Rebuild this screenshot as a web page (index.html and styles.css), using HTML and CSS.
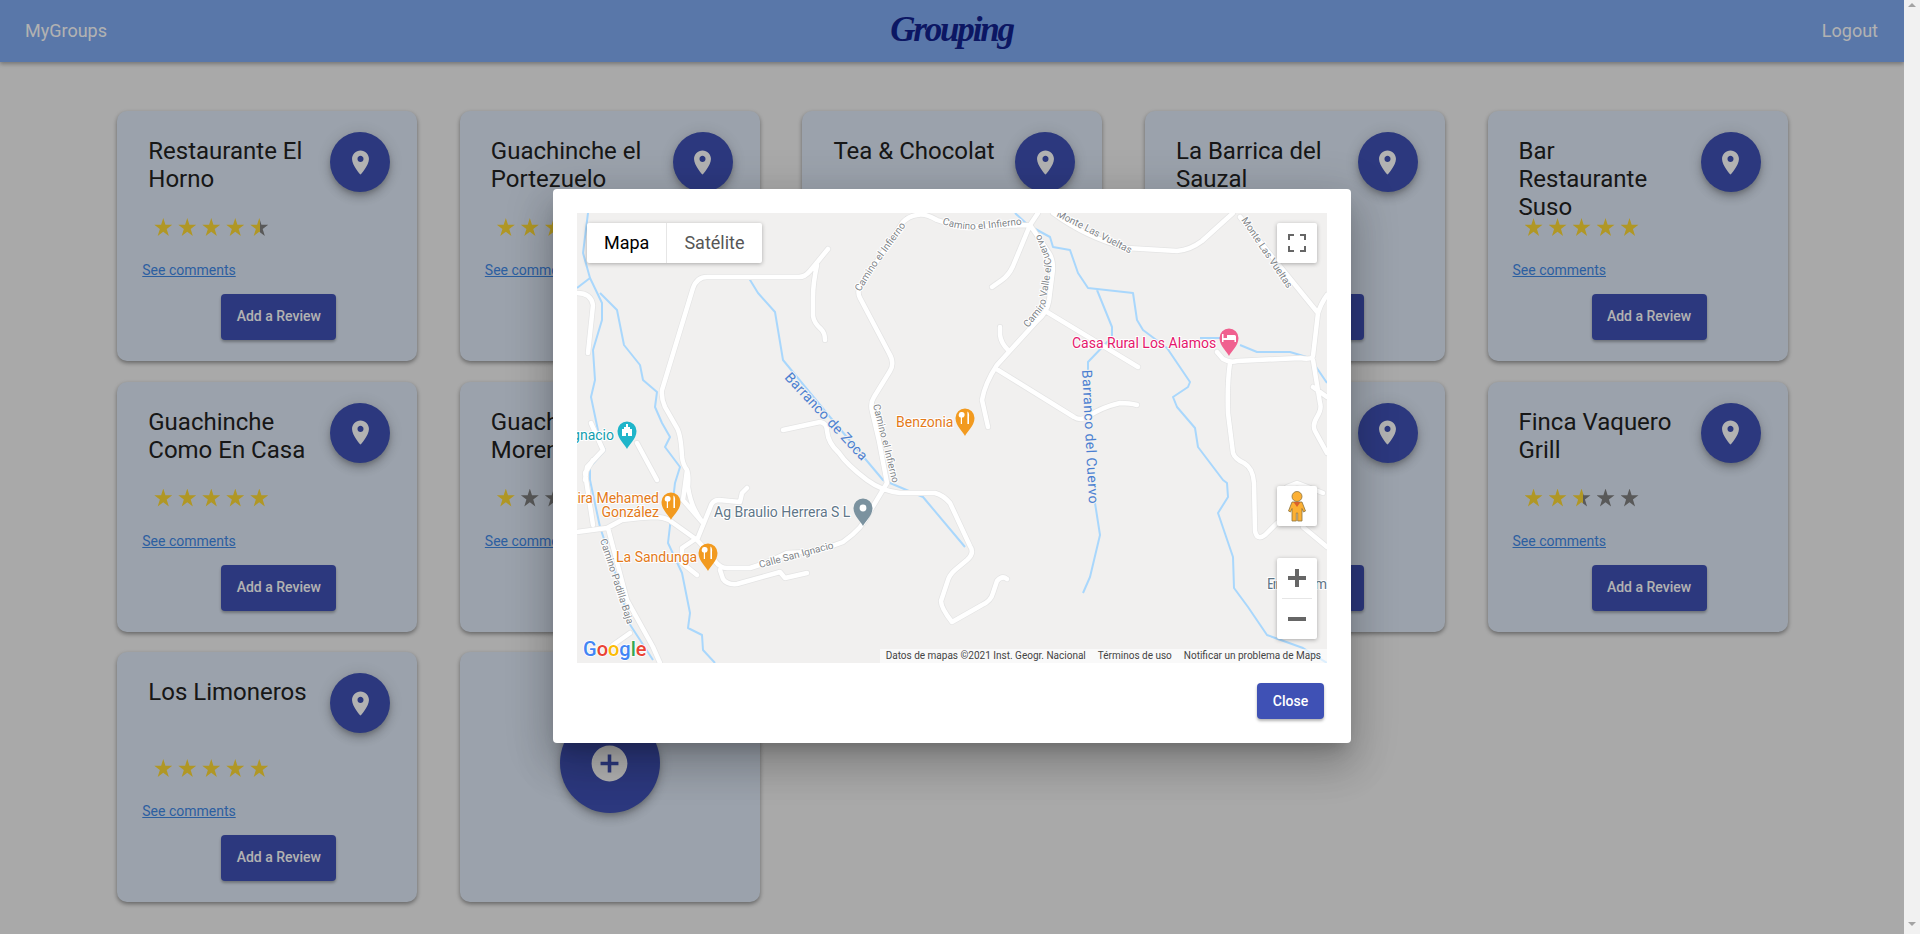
FILE: index.html
```html
<!DOCTYPE html>
<html lang="en">
<head>
    <meta charset="UTF-8">
    <meta name="viewport" content="width=device-width, initial-scale=1.0">
    <title>Grouping</title>
    <link rel="stylesheet" href="styles.css">
</head>
<body>
    <svg class="icon-defs" width="0" height="0" aria-hidden="true">
        <symbol id="icon-room" viewBox="0 0 24 24">
            <path d="M12 2C8.13 2 5 5.13 5 9c0 5.25 7 13 7 13s7-7.75 7-13c0-3.87-3.13-7-7-7zm0 9.5c-1.38 0-2.5-1.12-2.5-2.5s1.12-2.5 2.5-2.5 2.5 1.12 2.5 2.5-1.12 2.5-2.5 2.5z"/>
        </symbol>
        <symbol id="icon-add" viewBox="0 0 24 24">
            <path d="M12 2C6.48 2 2 6.48 2 12s4.48 10 10 10 10-4.48 10-10S17.52 2 12 2zm5 11h-4v4h-2v-4H7v-2h4V7h2v4h4v2z"/>
        </symbol>
    </svg>

    <div class="page">
        <header class="navbar">
            <a class="nav-link">MyGroups</a>
            <div class="logo">Grouping</div>
            <a class="nav-link nav-right">Logout</a>
        </header>

        <main class="cards">
            <article class="card">
                <div class="card-top">
                    <h2 class="card-title">Restaurante El Horno</h2>
                    <button class="fab"><svg><use href="#icon-room"/></svg></button>
                </div>
                <div class="rating"><i class="star"></i><i class="star"></i><i class="star"></i><i class="star"></i><i class="star half"></i></div>
                <a class="comments">See comments</a>
                <button class="review">Add a Review</button>
            </article>

            <article class="card">
                <div class="card-top">
                    <h2 class="card-title">Guachinche el Portezuelo</h2>
                    <button class="fab"><svg><use href="#icon-room"/></svg></button>
                </div>
                <div class="rating"><i class="star"></i><i class="star"></i><i class="star"></i><i class="star"></i><i class="star"></i></div>
                <a class="comments">See comments</a>
                <button class="review">Add a Review</button>
            </article>

            <article class="card">
                <div class="card-top">
                    <h2 class="card-title">Tea &amp; Chocolat</h2>
                    <button class="fab"><svg><use href="#icon-room"/></svg></button>
                </div>
            </article>

            <article class="card">
                <div class="card-top">
                    <h2 class="card-title">La Barrica del Sauzal</h2>
                    <button class="fab"><svg><use href="#icon-room"/></svg></button>
                </div>
                <div class="rating"></div>
                <span class="comments"></span>
                <button class="review">Add a Review</button>
            </article>

            <article class="card">
                <div class="card-top">
                    <h2 class="card-title">Bar Restaurante Suso</h2>
                    <button class="fab"><svg><use href="#icon-room"/></svg></button>
                </div>
                <div class="rating"><i class="star"></i><i class="star"></i><i class="star"></i><i class="star"></i><i class="star"></i></div>
                <a class="comments">See comments</a>
                <button class="review">Add a Review</button>
            </article>

            <article class="card">
                <div class="card-top">
                    <h2 class="card-title">Guachinche Como En Casa</h2>
                    <button class="fab"><svg><use href="#icon-room"/></svg></button>
                </div>
                <div class="rating"><i class="star"></i><i class="star"></i><i class="star"></i><i class="star"></i><i class="star"></i></div>
                <a class="comments">See comments</a>
                <button class="review">Add a Review</button>
            </article>

            <article class="card">
                <div class="card-top">
                    <h2 class="card-title">Guachinche Moreno</h2>
                    <button class="fab"><svg><use href="#icon-room"/></svg></button>
                </div>
                <div class="rating"><i class="star"></i><i class="star off"></i><i class="star off"></i><i class="star off"></i><i class="star off"></i></div>
                <a class="comments">See comments</a>
                <button class="review">Add a Review</button>
            </article>

            <article class="card">
                <div class="card-top">
                    <button class="fab fab-end"><svg><use href="#icon-room"/></svg></button>
                </div>
            </article>

            <article class="card">
                <div class="card-top">
                    <button class="fab fab-end"><svg><use href="#icon-room"/></svg></button>
                </div>
                <div class="rating"></div>
                <span class="comments"></span>
                <button class="review">Add a Review</button>
            </article>

            <article class="card">
                <div class="card-top">
                    <h2 class="card-title">Finca Vaquero Grill</h2>
                    <button class="fab"><svg><use href="#icon-room"/></svg></button>
                </div>
                <div class="rating"><i class="star"></i><i class="star"></i><i class="star half"></i><i class="star off"></i><i class="star off"></i></div>
                <a class="comments">See comments</a>
                <button class="review">Add a Review</button>
            </article>

            <article class="card">
                <div class="card-top">
                    <h2 class="card-title">Los Limoneros</h2>
                    <button class="fab"><svg><use href="#icon-room"/></svg></button>
                </div>
                <div class="rating"><i class="star"></i><i class="star"></i><i class="star"></i><i class="star"></i><i class="star"></i></div>
                <a class="comments">See comments</a>
                <button class="review">Add a Review</button>
            </article>

            <article class="card card-add">
                <button class="fab fab-big"><svg><use href="#icon-add"/></svg></button>
            </article>
        </main>

        <div class="overlay">
            <div class="dialog">
                <div class="map">
                    <svg class="map-canvas" viewBox="0 0 750 450" width="750" height="450">
                        <defs>
                            <path id="roads" d="M85 177L116 75Q120 64 130 64L222 64Q228 64 233 58L251 36M240 52Q236 70 236 84L236 103Q237 110 244 116Q248 120 248 127M85 177Q84 185 88 194L100 215Q104 222 105 244Q106 252 110 257Q112 262 111 274Q114 295 126 310M126 310L106 287L110 257M340 2Q332 3 326 9L283 74Q280 79 283 85L312 140Q318 150 313 158L297 184Q293 190 295 198L302 228L310 270L292 300Q286 315 266 329Q240 340 210 340Q190 350 173 355L150 355Q143 355 138 348Q125 332 120 327L92 307Q86 304 78 304L63 305L45 307L30 315L0 319M340 2Q348 0 360 7Q385 16 405 13L453 12M461 0L453 12L436 53Q432 62 425 67L415 74M206 217L243 209Q250 210 250 218Q251 230 262 240Q270 252 290 267Q305 278 323 280L358 280Q366 282 373 290L393 333Q398 340 390 347L378 357Q372 362 370 370L364 388Q364 395 375 409L405 392Q414 388 416 380L420 368Q425 362 430 366M143 357L146 366Q150 372 160 371L203 359L208 365L230 360M120 327L133 295Q135 287 142 287L163 289L165 280L170 275M120 325L105 335L105 350L120 362M16 312L8 260L16 247M31 315L50 387L76 434L83 450M53 420L36 432M0 80Q14 80 16 92L11 140M14 210L26 237L10 254L8 267M60 230L80 267M476 0Q510 25 550 35L600 38Q613 37 625 28L656 0M663 4L741 100Q744 90 750 82M741 100L736 143Q735 147 723 145L660 148Q653 150 646 146L640 139M653 150Q650 170 651 200L656 240Q658 246 667 250Q676 255 677 270L678 318Q680 328 688 322L700 310M726 314L750 334M710 274L720 270L746 280M736 147L743 190Q745 196 740 204Q735 212 738 218L750 240M736 174L750 184M453 12L472 40Q476 46 476 56L472 88Q470 100 460 108L420 152Q408 170 405 187L411 214M423 114L423 122Q424 130 431 137M470 99L561 154M421 157L497 204Q503 208 510 204Q525 194 543 190Q553 190 560 192"/>
                            <path id="lbl-infierno-a" d="M283 79L300 52L335 4"/>
                            <path id="lbl-infierno-b" d="M365 11Q385 18 405 16L460 10"/>
                            <path id="lbl-valle" d="M451 115L468 94L475 50L460 12"/>
                        </defs>

                        <rect class="land" width="750" height="450"/>

                        <path class="water" d="M11 0L6 40L13 65L25 90L25 107L16 137L18 167L14 184L23 227L28 237L13 254L13 267L23 314L45 380L50 407L76 447M0 75L13 65M23 80L40 97L47 132L63 152L66 167L80 179L78 194L85 210L93 224L88 234L103 254L98 270L91 330L105 360L113 400L111 415L125 422L126 437L138 450M170 62L181 80L198 99L206 147L253 204L306 267L346 284L388 334M438 0L451 12L473 24L476 34L493 37L501 60L511 75L556 80L560 107L566 117L590 135L613 169L611 174L596 184L600 194L618 215L621 234L646 267L650 270L651 284L641 300L656 344L657 375L671 394L690 422L726 435L750 450M520 77L535 114L535 124L511 149L511 157M518 290L523 322L513 364L506 380M623 125L643 125M663 132L680 139L713 139L733 145L750 170"/>

                        <use class="road-casing" href="#roads"/>
                        <use class="road" href="#roads"/>

                        <text class="water-label" transform="translate(207 165) rotate(47)" textLength="114">Barranco de Zoca</text>
                        <text class="water-label" transform="translate(505 157) rotate(87)" textLength="134">Barranco del Cuervo</text>

                        <text class="road-label"><textPath href="#lbl-infierno-a">Camino el Infierno</textPath></text>
                        <text class="road-label"><textPath href="#lbl-infierno-b">Camino el Infierno</textPath></text>
                        <text class="road-label" transform="translate(296 192) rotate(76)">Camino el Infierno</text>
                        <text class="road-label"><textPath href="#lbl-valle">Camino Valle el Cuervo</textPath></text>
                        <text class="road-label" transform="translate(479 3) rotate(27)">Monte Las Vueltas</text>
                        <text class="road-label" transform="translate(664 7) rotate(56)">Monte Las Vueltas</text>
                        <text class="road-label" transform="translate(183 355) rotate(-15)">Calle San Ignacio</text>
                        <text class="road-label" transform="translate(23 327) rotate(72)">Camino Padilla Baja</text>

                        <text class="poi hotel" x="495" y="135">Casa Rural Los Alamos</text>
                        <text class="poi food" x="319" y="214">Benzonia</text>
                        <text class="poi park" x="37" y="227" text-anchor="end">San Ignacio</text>
                        <text class="poi food" x="82" y="290" text-anchor="end">Samira Mehamed</text>
                        <text class="poi food" x="82" y="304" text-anchor="end">González</text>
                        <text class="poi food" x="39" y="349">La Sandunga</text>
                        <text class="poi shop" x="137" y="304">Ag Braulio Herrera S L</text>
                        <text class="poi shop" x="690" y="376" textLength="60">Ermita Salom</text>

                        <g transform="translate(652 125)">
                            <path class="pin-hotel" d="M0 18C-1.5 14-9.5 8-9.5 0A9.5 9.5 0 1 1 9.5 0C9.5 8 1.5 14 0 18Z"/>
                            <path class="pin-mark" d="M-7-4H-5.5V0H-2V-3H5.5A1.5 1.5 0 0 1 7-1.500V4H5.500V2H-5.500V4H-7Z"/>
                        </g>
                        <g transform="translate(388 205)">
                            <path class="pin-food" d="M0 18C-1.5 14-9.5 8-9.5 0A9.5 9.500 0 1 1 9.5 0C9.5 8 1.5 14 0 18Z"/>
                            <path class="pin-mark" d="M-3-6A2.600 2.800 0 0 1-3-.4V6H-4.200V-.4A2.600 2.800 0 0 1-3-6ZM2.400-6.500C4-6 4.400-3 4-1V6H2.400Z"/>
                        </g>
                        <g transform="translate(94 289)">
                            <path class="pin-food" d="M0 18C-1.5 14-9.5 8-9.5 0A9.5 9.500 0 1 1 9.5 0C9.5 8 1.5 14 0 18Z"/>
                            <path class="pin-mark" d="M-3-6A2.600 2.800 0 0 1-3-.4V6H-4.200V-.4A2.600 2.800 0 0 1-3-6ZM2.400-6.500C4-6 4.400-3 4-1V6H2.400Z"/>
                        </g>
                        <g transform="translate(131 340)">
                            <path class="pin-food" d="M0 18C-1.5 14-9.5 8-9.5 0A9.5 9.500 0 1 1 9.5 0C9.5 8 1.5 14 0 18Z"/>
                            <path class="pin-mark" d="M-3-6A2.600 2.800 0 0 1-3-.4V6H-4.200V-.4A2.600 2.800 0 0 1-3-6ZM2.400-6.500C4-6 4.400-3 4-1V6H2.400Z"/>
                        </g>
                        <g transform="translate(50 218)">
                            <path class="pin-park" d="M0 18C-1.5 14-9.5 8-9.5 0A9.5 9.500 0 1 1 9.5 0C9.5 8 1.5 14 0 18Z"/>
                            <path class="pin-mark" d="M-1-7H1V-4H3V-2H5V5H1V2H-1V5H-5V-2H-3V-4H-1Z"/>
                        </g>
                        <g transform="translate(286 295)">
                            <path class="pin-shop" d="M0 18C-1.5 14-9.5 8-9.5 0A9.5 9.500 0 1 1 9.5 0C9.5 8 1.5 14 0 18Z"/>
                            <circle class="pin-mark" r="3.400"/>
                        </g>

                        <text class="google-logo" x="6" y="443"><tspan fill="#4285f4">G</tspan><tspan fill="#ea4335">o</tspan><tspan fill="#fbbc05">o</tspan><tspan fill="#4285f4">g</tspan><tspan fill="#34a853">l</tspan><tspan fill="#ea4335">e</tspan></text>
                    </svg>

                    <div class="map-type">
                        <span class="map-type-on">Mapa</span>
                        <span>Satélite</span>
                    </div>

                    <div class="map-btn map-fullscreen">
                        <svg viewBox="0 0 18 18" width="18" height="18"><path d="M1 6V1H6M12 1H17V6M17 12V17H12M6 17H1V12"/></svg>
                    </div>

                    <div class="map-btn map-pegman">
                        <svg viewBox="0 0 40 40" width="40" height="40">
                            <path class="peg-body" d="M15 16H25L28.500 25L26.500 26L25 22.500V35H20.700V27H19.300V35H15V22.500L13.500 26L11.500 25Z"/>
                            <circle class="peg-body" cx="20" cy="10.500" r="5"/>
                            <path class="peg-scarf" d="M16.500 16H23.500L20 21Z"/>
                        </svg>
                    </div>

                    <div class="map-zoom">
                        <div class="map-zoom-btn"><span class="zoom-plus"></span></div>
                        <div class="map-zoom-btn"><span class="zoom-minus"></span></div>
                    </div>

                    <div class="map-credits">
                        <span>Datos de mapas ©2021 Inst. Geogr. Nacional</span>
                        <span>Términos de uso</span>
                        <span>Notificar un problema de Maps</span>
                    </div>
                </div>
                <div class="dialog-actions">
                    <button class="close-btn">Close</button>
                </div>
            </div>
        </div>
    </div>

    <div class="scrollbar">
        <span class="arrow-up"></span>
        <span class="arrow-down"></span>
    </div>
</body>
</html>
```

FILE: styles.css
```css
* {
    box-sizing: border-box;
}
body {
    margin: 0;
    display: flex;
    height: 934px;
    overflow: hidden;
    font-family: Roboto, "Liberation Sans", sans-serif;
    background-color: #f2f2f2;
}
.icon-defs {
    position: absolute;
}
.page {
    position: relative;
    flex: 1;
    height: 934px;
    overflow: hidden;
}

/* Top bar */
.navbar {
    display: grid;
    grid-template-columns: 1fr auto 1fr;
    align-items: center;
    height: 62px;
    padding: 0 26px 2px 25px;
    background-color: #80abf3;
    box-shadow: 0 2px 4px rgba(0, 0, 0, 0.3);
}
.nav-link {
    font-size: 18px;
    color: white;
}
.nav-right {
    text-align: right;
}
.logo {
    font-family: "Liberation Serif", serif;
    font-size: 35px;
    font-weight: bold;
    font-style: italic;
    letter-spacing: -2.2px;
    color: #12228f;
}

/* Cards */
.cards {
    display: grid;
    grid-template-columns: repeat(5, 1fr);
    grid-auto-rows: 250px;
    row-gap: 20.5px;
    justify-items: center;
    width: 90%;
    margin: 0 auto;
    padding: 49px 0 0 0.8px;
}
.card {
    display: flex;
    flex-direction: column;
    align-items: flex-start;
    width: 300px;
    height: 250px;
    padding: 21px 10px 0 25px;
    background-color: #dfe9f7;
    border-radius: 10px;
    box-shadow: 0 2px 4px rgba(0, 0, 0, 0.4);
}
.card-top {
    display: flex;
    justify-content: space-between;
    align-items: flex-start;
    width: 100%;
    height: 86px;
    flex-shrink: 0;
    padding-right: 17px;
}
.card-title {
    width: 164px;
    margin: 5px 0 0 6px;
    font-size: 24px;
    font-weight: 400;
    line-height: 28px;
    color: #222;
}
.fab {
    display: flex;
    align-items: center;
    justify-content: center;
    width: 60px;
    height: 60px;
    padding: 0;
    border: none;
    border-radius: 50%;
    background-color: #3f51b5;
    box-shadow: 0 3px 5px -1px rgba(0, 0, 0, 0.2), 0 6px 10px 0 rgba(0, 0, 0, 0.14), 0 1px 18px 0 rgba(0, 0, 0, 0.12);
}
.fab svg {
    width: 29px;
    height: 29px;
    fill: white;
}
.fab-end {
    margin-left: auto;
}
.card-add {
    align-items: center;
    padding: 61px 0 0;
}
.fab-big {
    width: 100px;
    height: 100px;
}
.fab-big svg {
    width: 43px;
    height: 43px;
}

.rating {
    display: flex;
    gap: 6px;
    height: 18px;
    margin-left: 12px;
}
.star {
    display: block;
    width: 18px;
    height: 18px;
    background: #fdd835;
    clip-path: polygon(50% 0, 62% 37%, 100% 38%, 69% 61%, 81% 100%, 50% 77%, 19% 100%, 31% 61%, 0 38%, 38% 37%);
}
.star.off {
    background: #808080;
}
.star.half {
    background: linear-gradient(90deg, #fdd835 53%, #808080 53%);
}
.comments {
    display: block;
    height: 20px;
    margin-top: 24px;
    font-size: 14px;
    line-height: 20px;
    color: #3f88e6;
    text-decoration: underline;
}
.review {
    width: 115px;
    height: 46px;
    margin: 14px 0 0 79px;
    padding: 0 0 2px;
    border: none;
    border-radius: 4px;
    background-color: #3f51b5;
    color: white;
    font-family: inherit;
    font-size: 14px;
    font-weight: 500;
    box-shadow: 0 2px 3px rgba(0, 0, 0, 0.3);
}

/* Dialog with the map */
.overlay {
    position: absolute;
    inset: 0;
    display: flex;
    align-items: center;
    justify-content: center;
    padding-bottom: 2px;
    background-color: rgba(0, 0, 0, 0.3);
}
.dialog {
    width: 798px;
    padding: 24px;
    background-color: white;
    border-radius: 4px;
    box-shadow: 0 11px 15px -7px rgba(0, 0, 0, 0.2), 0 24px 38px 3px rgba(0, 0, 0, 0.14), 0 9px 46px 8px rgba(0, 0, 0, 0.12);
}
.dialog-actions {
    display: flex;
    justify-content: flex-end;
    padding: 20px 3px 0 0;
}
.close-btn {
    width: 67px;
    height: 36px;
    padding: 0;
    border: none;
    border-radius: 4px;
    background-color: #3f51b5;
    color: white;
    font-family: inherit;
    font-size: 14px;
    font-weight: 500;
    box-shadow: 0 2px 3px rgba(0, 0, 0, 0.3);
}

.map {
    position: relative;
    width: 750px;
    height: 450px;
    overflow: hidden;
}
.map-canvas {
    display: block;
}
.land {
    fill: #f1f0ef;
}
.water {
    fill: none;
    stroke: #a9d7fc;
    stroke-width: 2;
    stroke-linejoin: round;
}
.road,
.road-casing {
    fill: none;
    stroke-linecap: round;
    stroke-linejoin: round;
}
.road {
    stroke: white;
    stroke-width: 4.5;
}
.road-casing {
    stroke: #e4e4e4;
    stroke-width: 6;
}
.water-label {
    font-size: 14px;
    fill: #4b7fd1;
    stroke: #f1f0ef;
    stroke-width: 2px;
    paint-order: stroke;
}
.road-label {
    font-size: 10px;
    fill: #808488;
    stroke: white;
    stroke-width: 2px;
    paint-order: stroke;
}
.poi {
    font-size: 14px;
    stroke: white;
    stroke-width: 2px;
    paint-order: stroke;
}
.hotel {
    fill: #e5176c;
}
.food {
    fill: #e37a1a;
}
.park {
    fill: #129eaf;
}
.shop {
    fill: #5f7688;
}
.pin-hotel {
    fill: #f0608f;
}
.pin-food {
    fill: #f29a1f;
}
.pin-park {
    fill: #1fb5ca;
}
.pin-shop {
    fill: #7b929f;
}
.pin-mark {
    fill: white;
}
.google-logo {
    font-size: 20px;
    font-weight: 500;
    stroke: white;
    stroke-width: 1.5px;
    paint-order: stroke;
}

.map-type {
    position: absolute;
    top: 10px;
    left: 10px;
    display: flex;
    height: 40px;
    background-color: white;
    border-radius: 2px;
    box-shadow: 0 1px 4px rgba(0, 0, 0, 0.3);
    font-size: 18px;
    line-height: 40px;
    color: #565656;
}
.map-type span {
    padding: 0 17px;
}
.map-type-on {
    border-right: 1px solid #e6e6e6;
    color: black;
}
.map-btn {
    position: absolute;
    left: 700px;
    display: flex;
    align-items: center;
    justify-content: center;
    width: 40px;
    height: 40px;
    background-color: white;
    border-radius: 2px;
    box-shadow: 0 1px 4px rgba(0, 0, 0, 0.3);
}
.map-fullscreen {
    top: 10px;
}
.map-fullscreen path {
    fill: none;
    stroke: #666;
    stroke-width: 2;
}
.map-pegman {
    top: 273px;
}
.peg-body {
    fill: #fcb034;
    stroke: #8c7440;
    stroke-width: 0.8;
}
.peg-scarf {
    fill: #d9622b;
}
.map-zoom {
    position: absolute;
    top: 345px;
    left: 700px;
    width: 40px;
    height: 81px;
    background-color: white;
    border-radius: 2px;
    box-shadow: 0 1px 4px rgba(0, 0, 0, 0.3);
}
.map-zoom-btn {
    position: relative;
    display: flex;
    align-items: center;
    justify-content: center;
    height: 40px;
}
.map-zoom-btn + .map-zoom-btn {
    height: 41px;
    margin: 0 5px;
    border-top: 1px solid #e6e6e6;
}
.zoom-plus,
.zoom-minus {
    display: block;
    width: 18px;
    height: 4px;
    background-color: #666;
}
.zoom-plus::after {
    content: "";
    position: absolute;
    top: 11px;
    left: 18px;
    width: 4px;
    height: 18px;
    background-color: #666;
}
.map-credits {
    position: absolute;
    right: 0;
    bottom: 0;
    display: flex;
    height: 14px;
    background-color: rgba(255, 255, 255, 0.6);
    font-size: 10px;
    line-height: 14px;
    color: #444;
}
.map-credits span {
    padding: 0 6px;
}

/* Disabled browser scrollbar */
.scrollbar {
    display: flex;
    flex-direction: column;
    justify-content: space-between;
    align-items: center;
    width: 16px;
    padding: 3px 0 8px;
    background-color: #f1f1f1;
}
.arrow-up,
.arrow-down {
    width: 0;
    height: 0;
    border-left: 4px solid transparent;
    border-right: 4px solid transparent;
}
.arrow-up {
    border-bottom: 4px solid #a3a3a3;
}
.arrow-down {
    border-top: 4px solid #a3a3a3;
}
```
